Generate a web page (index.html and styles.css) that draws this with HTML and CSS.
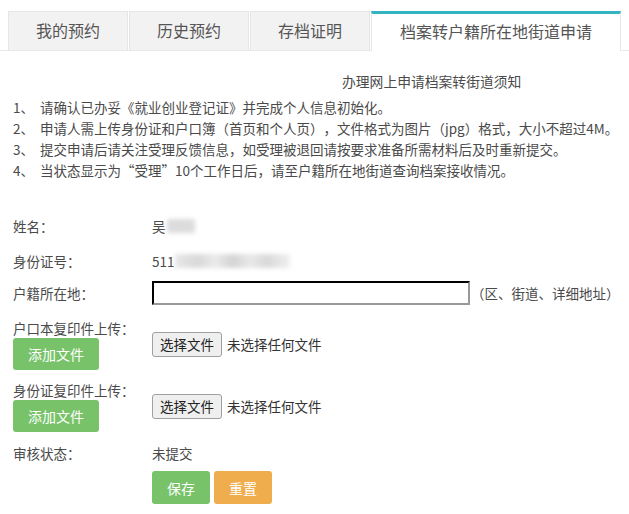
FILE: index.html
```html
<!DOCTYPE html>
<html lang="zh-CN">
<head>
<meta charset="utf-8">
<title>档案转户籍所在地街道申请</title>
<link rel="stylesheet" href="styles.css">
</head>
<body>
<div class="tabs">
  <ul class="tab-list">
    <li class="tab">我的预约</li>
    <li class="tab">历史预约</li>
    <li class="tab">存档证明</li>
    <li class="tab active">档案转户籍所在地街道申请</li>
  </ul>
</div>

<div class="notice">
  <h3 class="notice-title">办理网上申请档案转街道须知</h3>
  <ol class="notice-list">
    <li><span class="num">1、</span>请确认已办妥《就业创业登记证》并完成个人信息初始化。</li>
    <li><span class="num">2、</span>申请人需上传身份证和户口簿（首页和个人页），文件格式为图片（jpg）格式，大小不超过4M。</li>
    <li><span class="num">3、</span>提交申请后请关注受理反馈信息，如受理被退回请按要求准备所需材料后及时重新提交。</li>
    <li><span class="num">4、</span>当状态显示为“受理”10个工作日后，请至户籍所在地街道查询档案接收情况。</li>
  </ol>
</div>

<form class="form">
  <div class="row row-name">
    <div class="label">姓名：</div>
    <div class="value">吴<span class="mask mask-name"></span></div>
  </div>
  <div class="row row-id">
    <div class="label">身份证号：</div>
    <div class="value">511<span class="mask mask-id"></span></div>
  </div>
  <div class="row row-addr">
    <div class="label">户籍所在地：</div>
    <div class="value"><input class="text-input" type="text"><span class="hint">（区、街道、详细地址）</span></div>
  </div>
  <div class="row row-upload">
    <div class="label stack">
      <span>户口本复印件上传：</span>
      <button type="button" class="btn btn-green btn-add">添加文件</button>
    </div>
    <div class="value"><span class="file-btn">选择文件</span><span class="file-name">未选择任何文件</span></div>
  </div>
  <div class="row row-upload row-upload2">
    <div class="label stack">
      <span>身份证复印件上传：</span>
      <button type="button" class="btn btn-green btn-add">添加文件</button>
    </div>
    <div class="value"><span class="file-btn">选择文件</span><span class="file-name">未选择任何文件</span></div>
  </div>
  <div class="row row-status">
    <div class="label">审核状态：</div>
    <div class="value">未提交</div>
  </div>
  <div class="row row-actions">
    <div class="label"></div>
    <div class="value actions">
      <button type="button" class="btn btn-green btn-small">保存</button>
      <button type="button" class="btn btn-orange btn-small">重置</button>
    </div>
  </div>
</form>
</body>
</html>
```

FILE: styles.css
```css
* { box-sizing: border-box; }

body {
  margin: 0;
  background: #fff;
  color: #4a4a4a;
  font-family: "Noto Sans CJK SC", "Noto Sans", "Liberation Sans", sans-serif;
  font-size: 13.5px;
  text-spacing-trim: space-all;
  font-feature-settings: "chws" 0, "halt" 0, "palt" 0;
  overflow: hidden;
}

/* Tabs */
.tabs {
  padding-top: 11px;
  border-bottom: 1px solid #e8e8e8;
}
.tab-list {
  display: flex;
  margin: 0;
  padding: 0 0 0 8px;
  list-style: none;
}
.tab {
  height: 39px;
  line-height: 37px;
  padding: 0 27px;
  margin-right: 1px;
  margin-bottom: -1px;
  font-size: 16px;
  color: #555;
  background: #f2f2f2;
  border: 1px solid #e6e6e6;
  border-bottom: none;
}
.tab.active {
  background: #fff;
  border-top: 3px solid #33b5c1;
  line-height: 35px;
  padding: 0 28px;
  height: 40px;
}

/* Notice */
.notice {
  padding: 0 0 0 13px;
}
.notice-title {
  margin: 20px 0 6px 329px;
  font-size: 13.8px;
  font-weight: normal;
  line-height: 20px;
  color: #4a4a4a;
}
.notice-list {
  margin: 0;
  padding: 0;
  list-style: none;
  white-space: nowrap;
}
.notice-list li {
  line-height: 21px;
}
.num {
  display: inline-block;
  width: 27px;
}

/* Form */
.form {
  margin-top: 35px;
  padding-left: 13px;
}
.row {
  display: flex;
  align-items: center;
  line-height: 20px;
}
.label {
  width: 139px;
  flex: none;
}
.value {
  display: flex;
  align-items: center;
}
.row-id { margin-top: 15px; }
.row-addr { margin-top: 10px; }
.row-upload { margin-top: 13px; }
.row-upload2 { margin-top: 10px; }
.row-status { margin-top: 11px; }
.row-actions { margin-top: 8px; }

.mask {
  display: inline-block;
  height: 14px;
  background: #d4d4d4;
  filter: blur(2px);
  opacity: 0.8;
}
.mask-name { width: 28px; margin-left: 1px; }
.mask-id {
  width: 115px;
  margin-left: 1px;
  background: linear-gradient(90deg, #e2e2e2, #cfcfcf 20%, #e6e6e6 35%, #c9c9c9 50%, #e3e3e3 65%, #d0d0d0 80%, #ececec);
}

.text-input {
  width: 318px;
  height: 24px;
  border: 2px inset #767676;
  border-top-color: #333;
  border-left-color: #333;
  border-right-color: #999;
  border-bottom-color: #999;
  padding: 0 4px;
  font: inherit;
}
.hint { margin-left: 1px; }

.stack {
  display: flex;
  flex-direction: column;
  align-items: flex-start;
}
.btn {
  border: none;
  border-radius: 3px;
  color: #fff;
  font-family: inherit;
  font-size: 14px;
  cursor: pointer;
}
.btn-green { background: #78c36a; }
.btn-orange { background: #f0ad4e; }
.btn-add {
  width: 86px;
  height: 32px;
  margin-top: 0;
}
.file-btn {
  display: inline-block;
  height: 25px;
  line-height: 23px;
  padding: 0 7px;
  background: #efefef;
  border: 1px solid #a0a0a0;
  border-radius: 3px;
  color: #222;
  font-size: 13.5px;
}
.file-name {
  margin-left: 5px;
  color: #333;
}
.actions { gap: 4px; }
.btn-small {
  width: 58px;
  height: 33px;
}
```
